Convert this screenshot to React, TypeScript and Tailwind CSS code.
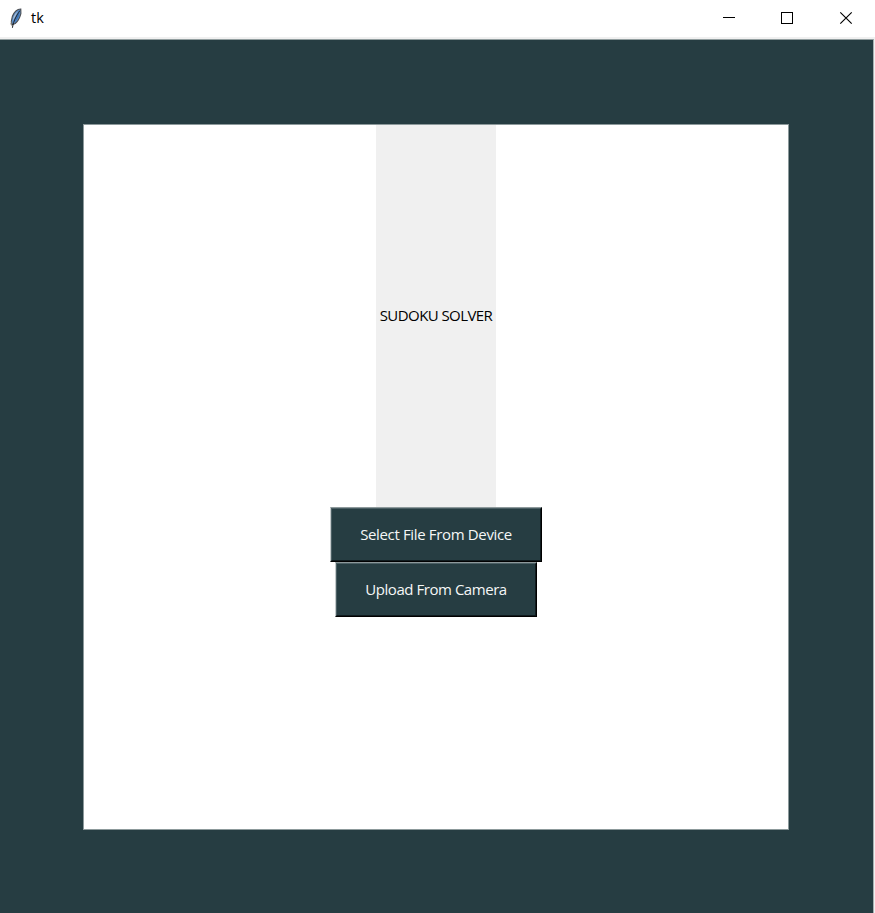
import type { ReactNode } from "react";

function FeatherIcon() {
  return (
    <svg width="14" height="22" viewBox="0 0 14 22" aria-hidden="true">
      <path d="M11.8 1C8.6 1.2 5 4.2 3.4 8.2L2.3 13.5 3.2 16.8 6.2 15.5C9.2 13.2 10.9 9.5 11.9 5.6Z" fill="#5b8fcb" stroke="#4a4d52" strokeWidth="1.1" />
      <path d="M8.5 3.4C5.6 6 4.2 9.2 3.6 13L6.4 8.2Z" fill="#aebfd4" />
      <path d="M10.6 3C10.8 7 9.2 10.8 5.4 14.4L7.6 9Z" fill="#3973b8" />
      <path d="M10.8 2.6C7.8 7.4 4.8 11.6 3.4 19.8" fill="none" stroke="#1c1f24" strokeWidth="1" />
      <path d="M2.6 13.5L1.9 16 3 17.6" fill="none" stroke="#7c776f" />
    </svg>
  );
}

function WindowControls() {
  return (
    <svg className="ml-auto" width="164" height="37" viewBox="711 0 164 37" fill="none" stroke="#000" strokeWidth="1">
      <path d="M723 17.5H735" />
      <rect x="781.5" y="12.5" width="11" height="11" />
      <path d="M840.3 12.3L851.7 23.7M851.7 12.3L840.3 23.7" strokeWidth="1.15" />
    </svg>
  );
}

function TkButton({ width, children }: { width: string; children: ReactNode }) {
  return (
    <button
      className={`${width} flex h-[55px] shrink-0 border border-t-[#8d999b] border-r-black border-b-black border-l-[#c5cbcc] bg-[#263d42] whitespace-nowrap text-[#f5f7f7]`}
    >
      <span className="flex h-[53px] w-full items-center justify-center border border-t-[#4b5f64] border-r-[#101b1e] border-b-[#101b1e] border-l-[#4b5f64] pb-[2px]">
        {children}
      </span>
    </button>
  );
}

export default function App() {
  return (
    <div className="flex h-[913px] w-[875px] flex-col overflow-hidden bg-[#f0f0f0] font-['Open_Sans','Noto_Sans',sans-serif] text-black">
      <header className="flex h-[37px] shrink-0 items-center bg-white pl-[9px]">
        <FeatherIcon />
        <span className="ml-2 pb-[2px] text-[14.5px] leading-5">tk</span>
        <WindowControls />
      </header>
      <div className="h-[2px] shrink-0 bg-[#f0f0f0]" />
      <div className="flex min-h-0 flex-1">
        <main className="h-full w-[874px] border-t border-r border-t-[#929e9f] border-r-[#a8b1b3] bg-[#263d42] pt-[84px] pl-[83px]">
          <section className="flex h-[706px] w-[706px] flex-col items-center border border-[#8c999b] bg-white">
            <div className="flex h-[382px] w-[120px] shrink-0 items-center justify-center bg-[#f0f0f0] pb-[2px] text-[15px] leading-5 tracking-[-0.57px] whitespace-nowrap">
              <span>SUDOKU SOLVER</span>
            </div>
            <TkButton width="w-[212px]">
              <span className="text-[15px] leading-5 tracking-[-0.35px]">Select File From Device</span>
            </TkButton>
            <TkButton width="w-[202px]">
              <span className="text-[15px] leading-5 tracking-[-0.45px]">Upload From Camera</span>
            </TkButton>
          </section>
        </main>
      </div>
    </div>
  );
}
